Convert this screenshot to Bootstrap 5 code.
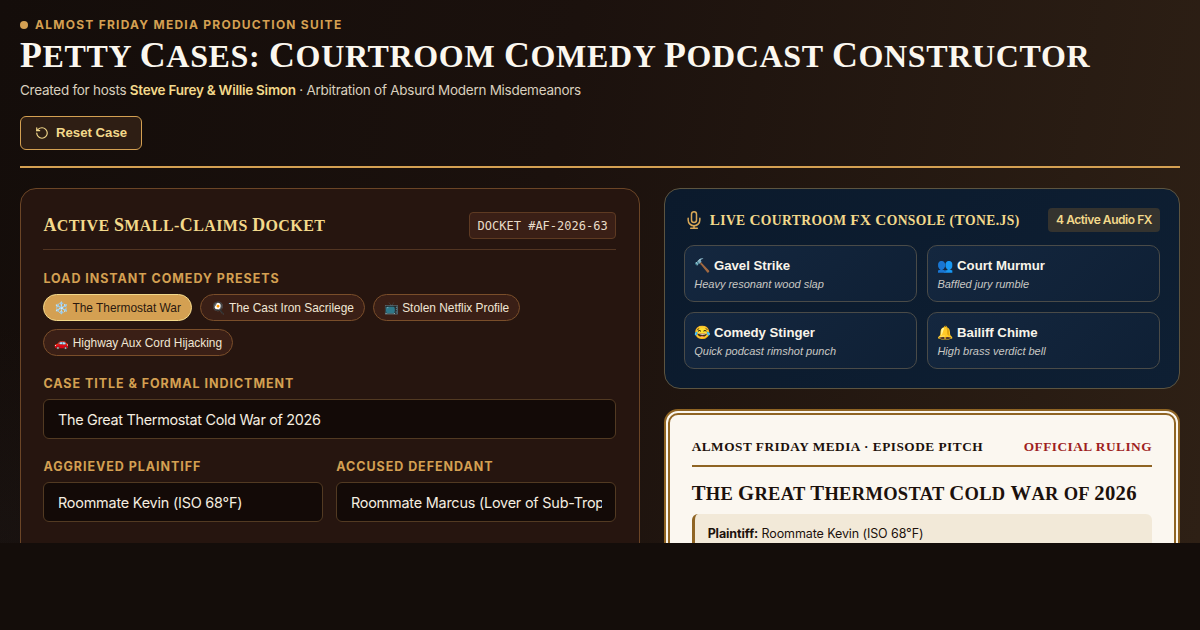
<!DOCTYPE html>
<html lang="en">
<head>
    <meta charset="UTF-8">
    <meta name="viewport" content="width=device-width, initial-scale=1.0">
    <title>Petty Cases</title>
    <link rel="stylesheet" href="https://cdn.jsdelivr.net/npm/bootstrap@5.3.0/dist/css/bootstrap.min.css">
    <style>
        html, body { height: 630px; overflow: hidden; }
        body { background: #140d0a; font-family: Inter, "Liberation Sans", sans-serif; color: #f5eee0; }
        .app-frame { height: 543px; overflow: hidden; padding: 16px 20px 0; background: radial-gradient(circle at 0 100%, rgba(50, 50, 55, .12), transparent 220px), linear-gradient(100deg, #140d0a 0%, #1b110d 45%, #2e2015 100%); }
        .eyebrow { font-size: 12px; font-weight: 700; letter-spacing: 1.25px; color: #d4a052; line-height: 18px; gap: 7px; }
        .eyebrow-dot { width: 8px; height: 8px; border-radius: 50%; background: #d4a052; }
        .serif-caps { font-family: "Liberation Serif", serif; font-weight: 700; text-transform: uppercase; }
        .ini { font-size: 1.12em; }
        .main-title { font-size: 32px; line-height: 38px; margin: 2px 0 0; color: #fbf7ef; letter-spacing: .66px; }
        .sub-line { font-size: 13.5px; line-height: 20px; margin: 5px 0 0; color: #d9cfbe; letter-spacing: -.26px; }
        .sub-line strong { color: #f3d98b; font-weight: 600; }
        .reset-btn { margin-top: 16px; height: 34px; padding: 0 14px; display: inline-flex; align-items: center; gap: 7px; font-family: "Liberation Sans", sans-serif; font-size: 13.2px; font-weight: 700; color: #f3d98b; background: #2e1e14; border: 1px solid #d4a052; border-radius: 6px; }
        .gold-rule { height: 2px; background: #d4a052; margin-top: 16px; }
        .two-cols { display: grid; grid-template-columns: 1.2fr 1fr; gap: 24px; margin-top: 20px; }
        .docket-card { background: #26150f; border: 1px solid #6b4526; border-radius: 16px; padding: 23px 22.4px 30px; height: 500px; }
        .docket-head { padding-bottom: 10px; border-bottom: 1px solid #523522; }
        .docket-title { font-size: 16px; line-height: 26px; margin: 0; color: #f3d98b; letter-spacing: .42px; }
        .docket-tag { font-family: "DejaVu Sans Mono", monospace; font-size: 12px; padding: 4.5px 7.6px; line-height: 16px; color: #e8dcc8; background: #3a1f16; border: 1px solid #5e3a22; border-radius: 4px; }
        .field-label { font-size: 12.5px; font-weight: 700; letter-spacing: .95px; line-height: 16px; color: #d4a052; margin-bottom: 7px; }
        .preset-label { margin-top: 21px; }
        .preset-wrap { gap: 8px; }
        .preset-chip { font-family: "Liberation Sans", sans-serif; font-size: 11.9px; line-height: 14px; height: 27px; padding: 0 10px; color: #f0e6d4; background: #3a1f16; border: 1px solid #7a4e2a; border-radius: 14px; white-space: nowrap; }
        .preset-chip.is-on { background: #d4a052; border-color: #f3d98b; color: #2a180f; }
        .case-label { margin-top: 20px; }
        .party-grid { display: grid; grid-template-columns: 1fr 1fr; gap: 13px; margin-top: 20px; }
        .dark-input, .dark-input:focus { height: 40px; font-size: 14.4px; letter-spacing: -.3px; padding: 0 13.6px; color: #f5eee0; background: #130a07; border: 1px solid #523a22; border-radius: 6px; box-shadow: none; }
        .party-grid .dark-input { letter-spacing: -.2px; }
        .fx-card { background: linear-gradient(135deg, #0b1a2c, #0e1f33); border: 1px solid #5c5440; border-radius: 16px; padding: 19px; }
        .fx-head-left { gap: 6px; }
        .fx-title { font-size: 13.6px; line-height: 22px; margin: 0; color: #f3d98b; letter-spacing: .4px; }
        .fx-count { font-size: 12px; font-weight: 600; letter-spacing: -.45px; line-height: 16px; padding: 4px 8px; color: #f3d98b; background: #34332f; border-radius: 4px; }
        .fx-grid { display: grid; grid-template-columns: 1fr 1fr; gap: 10px; margin-top: 13px; }
        .fx-btn { height: 57px; padding: 1px 9.6px 0; text-align: left; font-family: "Liberation Sans", sans-serif; background: linear-gradient(135deg, #14273f, #0f2035); border: 1px solid #4a4b48; border-radius: 10px; color: #f8f4ea; }
        .fx-name { display: block; font-size: 13.2px; font-weight: 700; line-height: 18px; }
        .fx-desc { display: block; font-size: 11px; font-style: italic; line-height: 16px; margin-top: 1px; color: #c9c8c4; }
        .ruling-card { margin-top: 20px; background: #fbf7f0; border: 6px double #8f6423; border-radius: 14px; padding: 23px 22px 0; height: 300px; color: #1c110c; }
        .ruling-head { padding-bottom: 9px; border-bottom: 2px solid #8f6423; font-size: 13.3px; line-height: 18px; letter-spacing: .5px; }
        .ruling-red { color: #9f1f1f; }
        .ruling-title { font-size: 18.5px; line-height: 30px; margin: 11px 0 5px; letter-spacing: .3px; }
        .ruling-box { background: #f2e9d8; border-left: 3px solid #8f6423; border-radius: 6px; padding: 11px 13px; font-size: 12.5px; line-height: 18px; letter-spacing: -.1px; }
    </style>
</head>
<body>
<div class="app-frame">
    <header>
        <div class="eyebrow d-flex align-items-center text-uppercase">
            <span class="eyebrow-dot"></span>Almost Friday Media Production Suite
        </div>
        <h1 class="main-title serif-caps"><span class="ini">P</span>etty <span class="ini">C</span>ases: <span class="ini">C</span>ourtroom <span class="ini">C</span>omedy <span class="ini">P</span>odcast <span class="ini">C</span>onstructor</h1>
        <p class="sub-line">Created for hosts <strong>Steve Furey &amp; Willie Simon</strong> · Arbitration of Absurd Modern Misdemeanors</p>
        <button type="button" class="btn reset-btn">
            <svg width="14" height="14" viewBox="0 0 24 24" fill="none" stroke="currentColor" stroke-width="2" stroke-linecap="round" stroke-linejoin="round"><path d="M3 12a9 9 0 1 0 9-9 9.75 9.75 0 0 0-6.74 2.74L3 8"/><path d="M3 3v5h5"/></svg>
            Reset Case
        </button>
        <div class="gold-rule"></div>
    </header>

    <div class="two-cols">
        <section class="docket-card">
            <div class="docket-head d-flex justify-content-between align-items-center">
                <h2 class="docket-title serif-caps"><span class="ini">A</span>ctive <span class="ini">S</span>mall-<span class="ini">C</span>laims <span class="ini">D</span>ocket</h2>
                <span class="docket-tag">DOCKET #AF-2026-63</span>
            </div>

            <div class="field-label text-uppercase preset-label">Load Instant Comedy Presets</div>
            <div class="d-flex flex-wrap preset-wrap">
                <button type="button" class="preset-chip is-on">❄️ The Thermostat War</button>
                <button type="button" class="preset-chip">🍳 The Cast Iron Sacrilege</button>
                <button type="button" class="preset-chip">📺 Stolen Netflix Profile</button>
                <button type="button" class="preset-chip">🚗 Highway Aux Cord Hijacking</button>
            </div>

            <div class="field-label text-uppercase case-label">Case Title &amp; Formal Indictment</div>
            <input type="text" class="form-control dark-input" value="The Great Thermostat Cold War of 2026">

            <div class="party-grid">
                <div>
                    <div class="field-label text-uppercase">Aggrieved Plaintiff</div>
                    <input type="text" class="form-control dark-input" value="Roommate Kevin (ISO 68°F)">
                </div>
                <div>
                    <div class="field-label text-uppercase">Accused Defendant</div>
                    <input type="text" class="form-control dark-input" value="Roommate Marcus (Lover of Sub-Tropical Heat)">
                </div>
            </div>
        </section>

        <div>
            <section class="fx-card">
                <div class="d-flex justify-content-between align-items-center">
                    <div class="d-flex align-items-center fx-head-left">
                        <svg width="20" height="20" viewBox="0 0 24 24" fill="none" stroke="#d9a857" stroke-width="1.8" stroke-linecap="round" stroke-linejoin="round"><rect x="9" y="2" width="6" height="13" rx="3"/><path d="M19 10v2a7 7 0 0 1-14 0v-2"/><path d="M12 19v3"/><path d="M8 22h8"/></svg>
                        <h2 class="fx-title serif-caps"><span class="ini">L</span>ive <span class="ini">C</span>ourtroom <span class="ini">FX</span> <span class="ini">C</span>onsole (<span class="ini">T</span>one.js)</h2>
                    </div>
                    <span class="fx-count">4 Active Audio FX</span>
                </div>
                <div class="fx-grid">
                    <button type="button" class="fx-btn"><span class="fx-name">🔨 Gavel Strike</span><span class="fx-desc">Heavy resonant wood slap</span></button>
                    <button type="button" class="fx-btn"><span class="fx-name">👥 Court Murmur</span><span class="fx-desc">Baffled jury rumble</span></button>
                    <button type="button" class="fx-btn"><span class="fx-name">😂 Comedy Stinger</span><span class="fx-desc">Quick podcast rimshot punch</span></button>
                    <button type="button" class="fx-btn"><span class="fx-name">🔔 Bailiff Chime</span><span class="fx-desc">High brass verdict bell</span></button>
                </div>
            </section>

            <section class="ruling-card">
                <div class="ruling-head serif-caps d-flex justify-content-between">
                    <span>Almost Friday Media · Episode Pitch</span>
                    <span class="ruling-red">Official Ruling</span>
                </div>
                <h2 class="ruling-title serif-caps"><span class="ini">T</span>he <span class="ini">G</span>reat <span class="ini">T</span>hermostat <span class="ini">C</span>old <span class="ini">W</span>ar of <span class="ini">2026</span></h2>
                <div class="ruling-box"><strong>Plaintiff:</strong> Roommate Kevin (ISO 68°F)</div>
            </section>
        </div>
    </div>
</div>
<script src="https://cdn.jsdelivr.net/npm/bootstrap@5.3.0/dist/js/bootstrap.bundle.min.js"></script>
</body>
</html>
